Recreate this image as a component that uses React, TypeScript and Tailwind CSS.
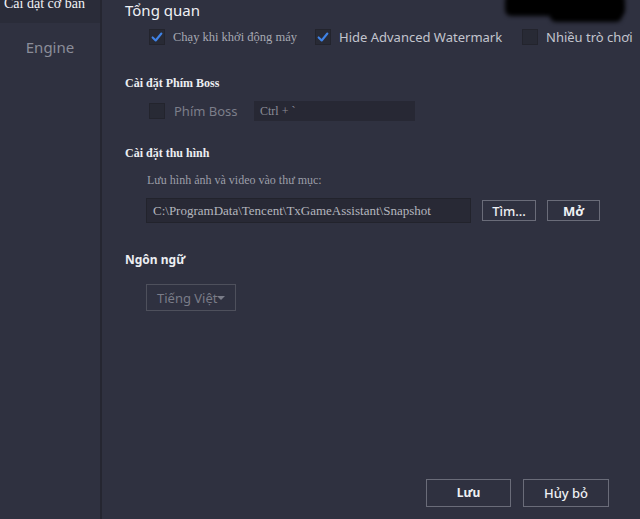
import { useState } from 'react';

const serif = { fontFamily: '"Liberation Serif", "DejaVu Serif", serif' };
const sans = { fontFamily: '"Noto Sans", "Open Sans", sans-serif' };

function CheckMark() {
  return (
    <svg viewBox="0 0 16 16" className="h-[14px] w-[14px]">
      <path d="M3 8.5 L6.5 12 L13 4" fill="none" stroke="#3f82e6" strokeWidth="2.4" strokeLinecap="round" strokeLinejoin="round" />
    </svg>
  );
}

function Checkbox({ checked }: { checked: boolean }) {
  return (
    <span className="flex h-[16px] w-[16px] shrink-0 items-center justify-center border border-[#23242d] bg-[#282a35]">
      {checked ? <CheckMark /> : null}
    </span>
  );
}

function SectionTitle({ children, font }: { children: string; font: 'serif' | 'sans' }) {
  return (
    <div
      className="text-[12px] leading-[16px] font-bold text-[#eceef2]"
      style={font === 'serif' ? serif : sans}
    >
      {children}
    </div>
  );
}

function OutlineButton({ label, className }: { label: string; className: string }) {
  return (
    <button
      type="button"
      className={`flex items-center justify-center border border-[#6a6c79] bg-transparent leading-[16px] text-[#eef0f4] ${className}`}
    >
      {label}
    </button>
  );
}

export default function App() {
  const [autoStart] = useState(true);
  const [hideWatermark] = useState(true);

  return (
    <div className="relative flex h-[519px] w-[640px] overflow-hidden bg-[#2f3140]">
      <aside className="flex w-[102px] shrink-0 flex-col border-r-2 border-[#252631] bg-[#2f3140]">
        <div className="flex h-[23px] items-start bg-[#2a2c39] pl-[4px]">
          <span className="-mt-[5px] text-[14px] leading-[18px] text-[#f2f3f6]" style={serif}>
            Cài đặt cơ bản
          </span>
        </div>
        <div className="flex h-[48px] items-center justify-center text-[15px] text-[#8b8d99]" style={sans}>
          Engine
        </div>
      </aside>

      <main className="flex min-w-0 flex-1 flex-col overflow-hidden pl-[23px] pr-[31px]">
        <div className="text-[15px] leading-[20px] text-[#eef0f4]" style={sans}>
          Tổng quan
        </div>

        <div className="mt-[9px] ml-[24px] flex items-center">
          <label className="flex w-[166px] shrink-0 items-center gap-[8px]">
            <Checkbox checked={autoStart} />
            <span className="text-[12.5px] leading-[16px] whitespace-nowrap text-[#a7a9b3]" style={serif}>
              Chạy khi khởi động máy
            </span>
          </label>
          <label className="flex w-[207px] shrink-0 items-center gap-[8px]">
            <Checkbox checked={hideWatermark} />
            <span className="text-[13px] leading-[16px] whitespace-nowrap text-[#c3c5ce]" style={sans}>
              Hide Advanced Watermark
            </span>
          </label>
          <label className="flex shrink-0 items-center gap-[8px]">
            <Checkbox checked={false} />
            <span className="text-[13px] leading-[16px] whitespace-nowrap text-[#c3c5ce]" style={sans}>
              Nhiều trò chơi
            </span>
          </label>
        </div>

        <div className="mt-[30px]">
          <SectionTitle font="serif">Cài đặt Phím Boss</SectionTitle>
        </div>

        <div className="mt-[10px] ml-[24px] flex items-center">
          <Checkbox checked={false} />
          <span className="ml-[9px] w-[80px] text-[13px] leading-[16px] text-[#7c7e8a]" style={sans}>
            Phím Boss
          </span>
          <div
            className="flex h-[20px] w-[161px] items-center bg-[#272834] pl-[6px] text-[12px] leading-[16px] text-[#8b8d97]"
            style={serif}
          >
            Ctrl + `
          </div>
        </div>

        <div className="mt-[24px]">
          <SectionTitle font="serif">Cài đặt thu hình</SectionTitle>
        </div>

        <div className="mt-[11px] ml-[22px] text-[12px] leading-[16px] text-[#9c9ea8]" style={serif}>
          Lưu hình ảnh và video vào thư mục:
        </div>

        <div className="mt-[10px] ml-[21px] flex items-center">
          <div
            className="flex h-[25px] w-[325px] shrink-0 items-center border border-[#22232c] bg-[#282935] pl-[6px] text-[13px] leading-[16px] whitespace-nowrap text-[#b4b6be]"
            style={serif}
          >
            C:\ProgramData\Tencent\TxGameAssistant\Snapshot
          </div>
          <OutlineButton label="Tìm..." className="ml-[11px] h-[21px] w-[54px] shrink-0 text-[13px] font-medium" />
          <OutlineButton label="Mở" className="ml-[11px] h-[21px] w-[53px] shrink-0 text-[13px] font-bold" />
        </div>

        <div className="mt-[29px]">
          <SectionTitle font="sans">Ngôn ngữ</SectionTitle>
        </div>

        <div
          className="mt-[16px] ml-[21px] flex h-[27px] w-[90px] items-center border border-[#4e505c] pl-[10px] text-[13px] leading-[16px] text-[#7a7c88]"
          style={sans}
        >
          Tiếng Việt
          <span className="-ml-[1px] mt-[1px] h-0 w-0 border-x-[4px] border-t-[4px] border-x-transparent border-t-[#7a7c88]" />
        </div>

        <div className="flex-1" />

        <div className="mb-[12px] flex justify-end gap-[12px]" style={sans}>
          <OutlineButton label="Lưu" className="h-[28px] w-[85px] text-[12px] font-bold" />
          <OutlineButton label="Hủy bỏ" className="h-[28px] w-[86px] text-[13px] font-medium" />
        </div>
      </main>

      <div className="absolute top-[-6px] left-[505px] h-[22px] w-[120px] rounded-[6px] bg-black blur-[2px]" />
      <div className="absolute top-[8px] left-[550px] h-[14px] w-[72px] rounded-[6px] bg-black blur-[2px]" />
    </div>
  );
}
